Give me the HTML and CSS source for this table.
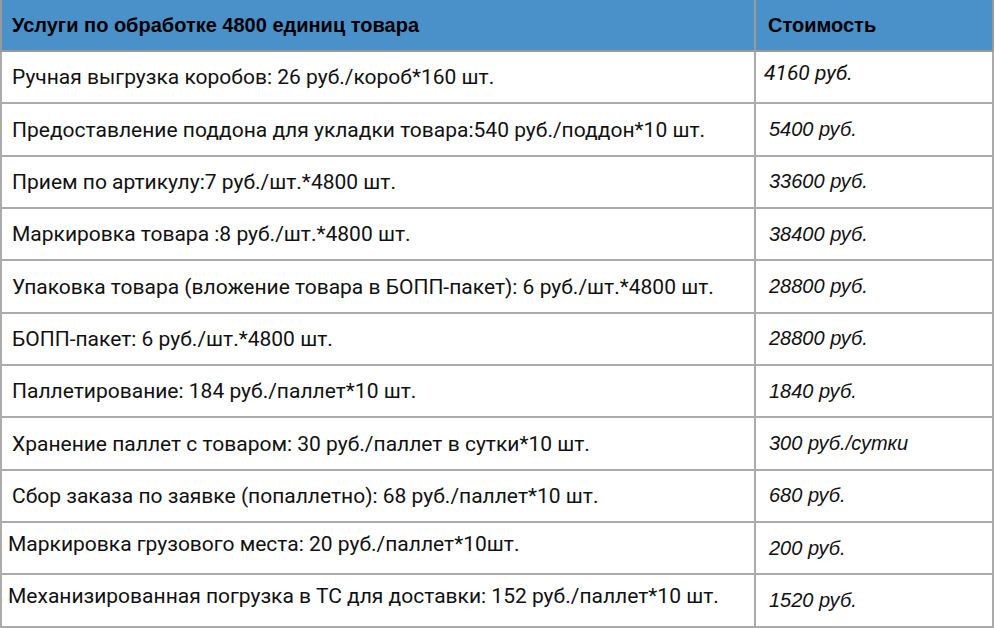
FILE: index.html
```html
<!DOCTYPE html>
<html lang="ru">
<head>
<meta charset="utf-8">
<link rel="stylesheet" href="styles.css">
</head>
<body>
<table class="price">
  <thead>
    <tr class="head">
      <th class="svc">Услуги по обработке 4800 единиц товара</th>
      <th class="cost">Стоимость</th>
    </tr>
  </thead>
  <tbody>
    <tr>
      <td class="svc">Ручная выгрузка коробов: 26 руб./короб*160 шт.</td>
      <td class="cost up">4160 руб.</td>
    </tr>
    <tr>
      <td class="svc">Предоставление поддона для укладки товара:540 руб./поддон*10 шт.</td>
      <td class="cost">5400 руб.</td>
    </tr>
    <tr>
      <td class="svc">Прием по артикулу:7 руб./шт.*4800 шт.</td>
      <td class="cost">33600 руб.</td>
    </tr>
    <tr>
      <td class="svc">Маркировка товара :8 руб./шт.*4800 шт.</td>
      <td class="cost">38400 руб.</td>
    </tr>
    <tr>
      <td class="svc">Упаковка товара (вложение товара в БОПП-пакет): 6 руб./шт.*4800 шт.</td>
      <td class="cost">28800 руб.</td>
    </tr>
    <tr>
      <td class="svc">БОПП-пакет: 6 руб./шт.*4800 шт.</td>
      <td class="cost">28800 руб.</td>
    </tr>
    <tr>
      <td class="svc">Паллетирование: 184 руб./паллет*10 шт.</td>
      <td class="cost">1840 руб.</td>
    </tr>
    <tr>
      <td class="svc">Хранение паллет с товаром: 30 руб./паллет в сутки*10 шт.</td>
      <td class="cost">300 руб./сутки</td>
    </tr>
    <tr>
      <td class="svc">Сбор заказа по заявке (попаллетно): 68 руб./паллет*10 шт.</td>
      <td class="cost">680 руб.</td>
    </tr>
    <tr>
      <td class="svc narrow up">Маркировка грузового места: 20 руб./паллет*10шт.</td>
      <td class="cost">200 руб.</td>
    </tr>
    <tr>
      <td class="svc narrow up">Механизированная погрузка в ТС для доставки: 152 руб./паллет*10 шт.</td>
      <td class="cost">1520 руб.</td>
    </tr>
  </tbody>
</table>
</body>
</html>
```

FILE: styles.css
```css
html, body {
  margin: 0;
  padding: 0;
  background: #ffffff;
}

.price {
  border-collapse: collapse;
  table-layout: fixed;
  width: 994px;
  font-family: Roboto, "Liberation Sans", sans-serif;
  font-size: 21px;
  color: #111111;
}

.price th,
.price td {
  border: 2px solid #ababab;
  padding: 0 0 0 10px;
  text-align: left;
  vertical-align: middle;
  white-space: nowrap;
  overflow: hidden;
}

.price .svc {
  width: 742px;
}

.head th {
  height: 50px;
  background: #4a90c9;
  border-color: #9a9a9a;
  font-family: "Liberation Sans", Arial, sans-serif;
  font-weight: bold;
  font-size: 20px;
  color: #000000;
  border-top: none;
}

.head th.cost {
  padding-left: 12px;
}

.price tbody tr {
  height: 52.35px;
}

.price td.cost {
  font-family: "Liberation Sans", Arial, sans-serif;
  font-style: italic;
  font-size: 20px;
  padding-left: 13px;
}

.price td.up {
  vertical-align: top;
  padding-top: 8px;
}

.price td.cost.up {
  padding-left: 8px;
  padding-top: 9px;
  font-family: Roboto, sans-serif;
  font-size: 21px;
}

.price td.narrow {
  padding-left: 6px;
  padding-top: 9px;
}
```
